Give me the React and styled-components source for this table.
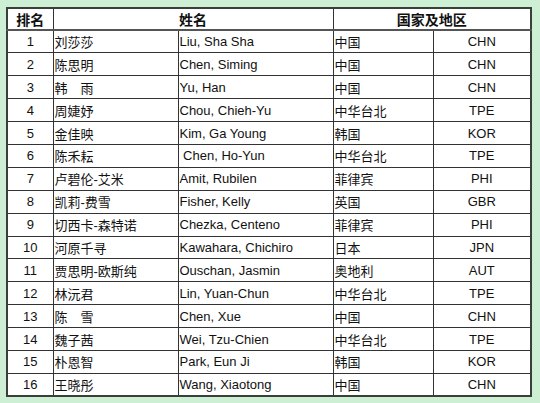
import React from 'react';
import styled, { createGlobalStyle } from 'styled-components';

const rows = [
  ['1', '刘莎莎', 'Liu, Sha Sha', '中国', 'CHN'],
  ['2', '陈思明', 'Chen, Siming', '中国', 'CHN'],
  ['3', '韩　雨', 'Yu, Han', '中国', 'CHN'],
  ['4', '周婕妤', 'Chou, Chieh-Yu', '中华台北', 'TPE'],
  ['5', '金佳映', 'Kim, Ga Young', '韩国', 'KOR'],
  ['6', '陈禾耘', '\u00a0Chen, Ho-Yun', '中华台北', 'TPE'],
  ['7', '卢碧伦-艾米', 'Amit, Rubilen', '菲律宾', 'PHI'],
  ['8', '凯莉-费雪', 'Fisher, Kelly', '英国', 'GBR'],
  ['9', '切西卡-森特诺', 'Chezka, Centeno', '菲律宾', 'PHI'],
  ['10', '河原千寻', 'Kawahara, Chichiro', '日本', 'JPN'],
  ['11', '贾思明-欧斯纯', 'Ouschan, Jasmin', '奥地利', 'AUT'],
  ['12', '林沅君', 'Lin, Yuan-Chun', '中华台北', 'TPE'],
  ['13', '陈　雪', 'Chen, Xue', '中国', 'CHN'],
  ['14', '魏子茜', 'Wei, Tzu-Chien', '中华台北', 'TPE'],
  ['15', '朴恩智', 'Park, Eun Ji', '韩国', 'KOR'],
  ['16', '王晓彤', 'Wang, Xiaotong', '中国', 'CHN'],
];

const App = () => (
  <>
    <GlobalStyle />
    <Page>
      <Table>
        <colgroup>
          <col style={{ width: 46 }} />
          <col style={{ width: 125 }} />
          <col style={{ width: 155 }} />
          <col style={{ width: 100 }} />
          <col style={{ width: 98 }} />
        </colgroup>
        <thead>
          <tr>
            <Head>排名</Head>
            <Head colSpan={2}>姓名</Head>
            <Head colSpan={2}>国家及地区</Head>
          </tr>
        </thead>
        <tbody>
          {rows.map(([rank, cn, en, country, code]) => (
            <Row key={rank}>
              <Cell center>{rank}</Cell>
              <Cell>{cn}</Cell>
              <Cell>{en}</Cell>
              <Cell>{country}</Cell>
              <Cell center>{code}</Cell>
            </Row>
          ))}
        </tbody>
      </Table>
    </Page>
  </>
);

const GlobalStyle = createGlobalStyle`
  html, body {
    margin: 0;
    padding: 0;
    background: #cdefd3;
  }
`;

const Page = styled.div`
  width: 540px;
  height: 403px;
  padding: 7px 0 0 6px;
  box-sizing: border-box;
  background: #cdefd3;
`;

const Table = styled.table`
  border-collapse: collapse;
  table-layout: fixed;
  width: 525px;
  background: #ffffff;
  border: 2px solid #3a3f3a;
  font-family: "Liberation Sans", Arial, "Noto Sans CJK SC", sans-serif;
  font-size: 13px;
  color: #111;
`;

const Head = styled.th`
  height: 20px;
  padding: 0;
  font-size: 14px;
  font-weight: bold;
  text-align: center;
  border: 1px solid #333;
  border-bottom-width: 2px;
  border-bottom-color: #555;
`;

const Row = styled.tr`
  height: 22.9px;
`;

const Cell = styled.td`
  padding: 0 0 0 ${p => (p.center ? '0' : '1px')};
  text-align: ${p => (p.center ? 'center' : 'left')};
  white-space: nowrap;
  overflow: hidden;
  border: 1px solid #333;
  border-top-color: #555;
`;

export default App;
